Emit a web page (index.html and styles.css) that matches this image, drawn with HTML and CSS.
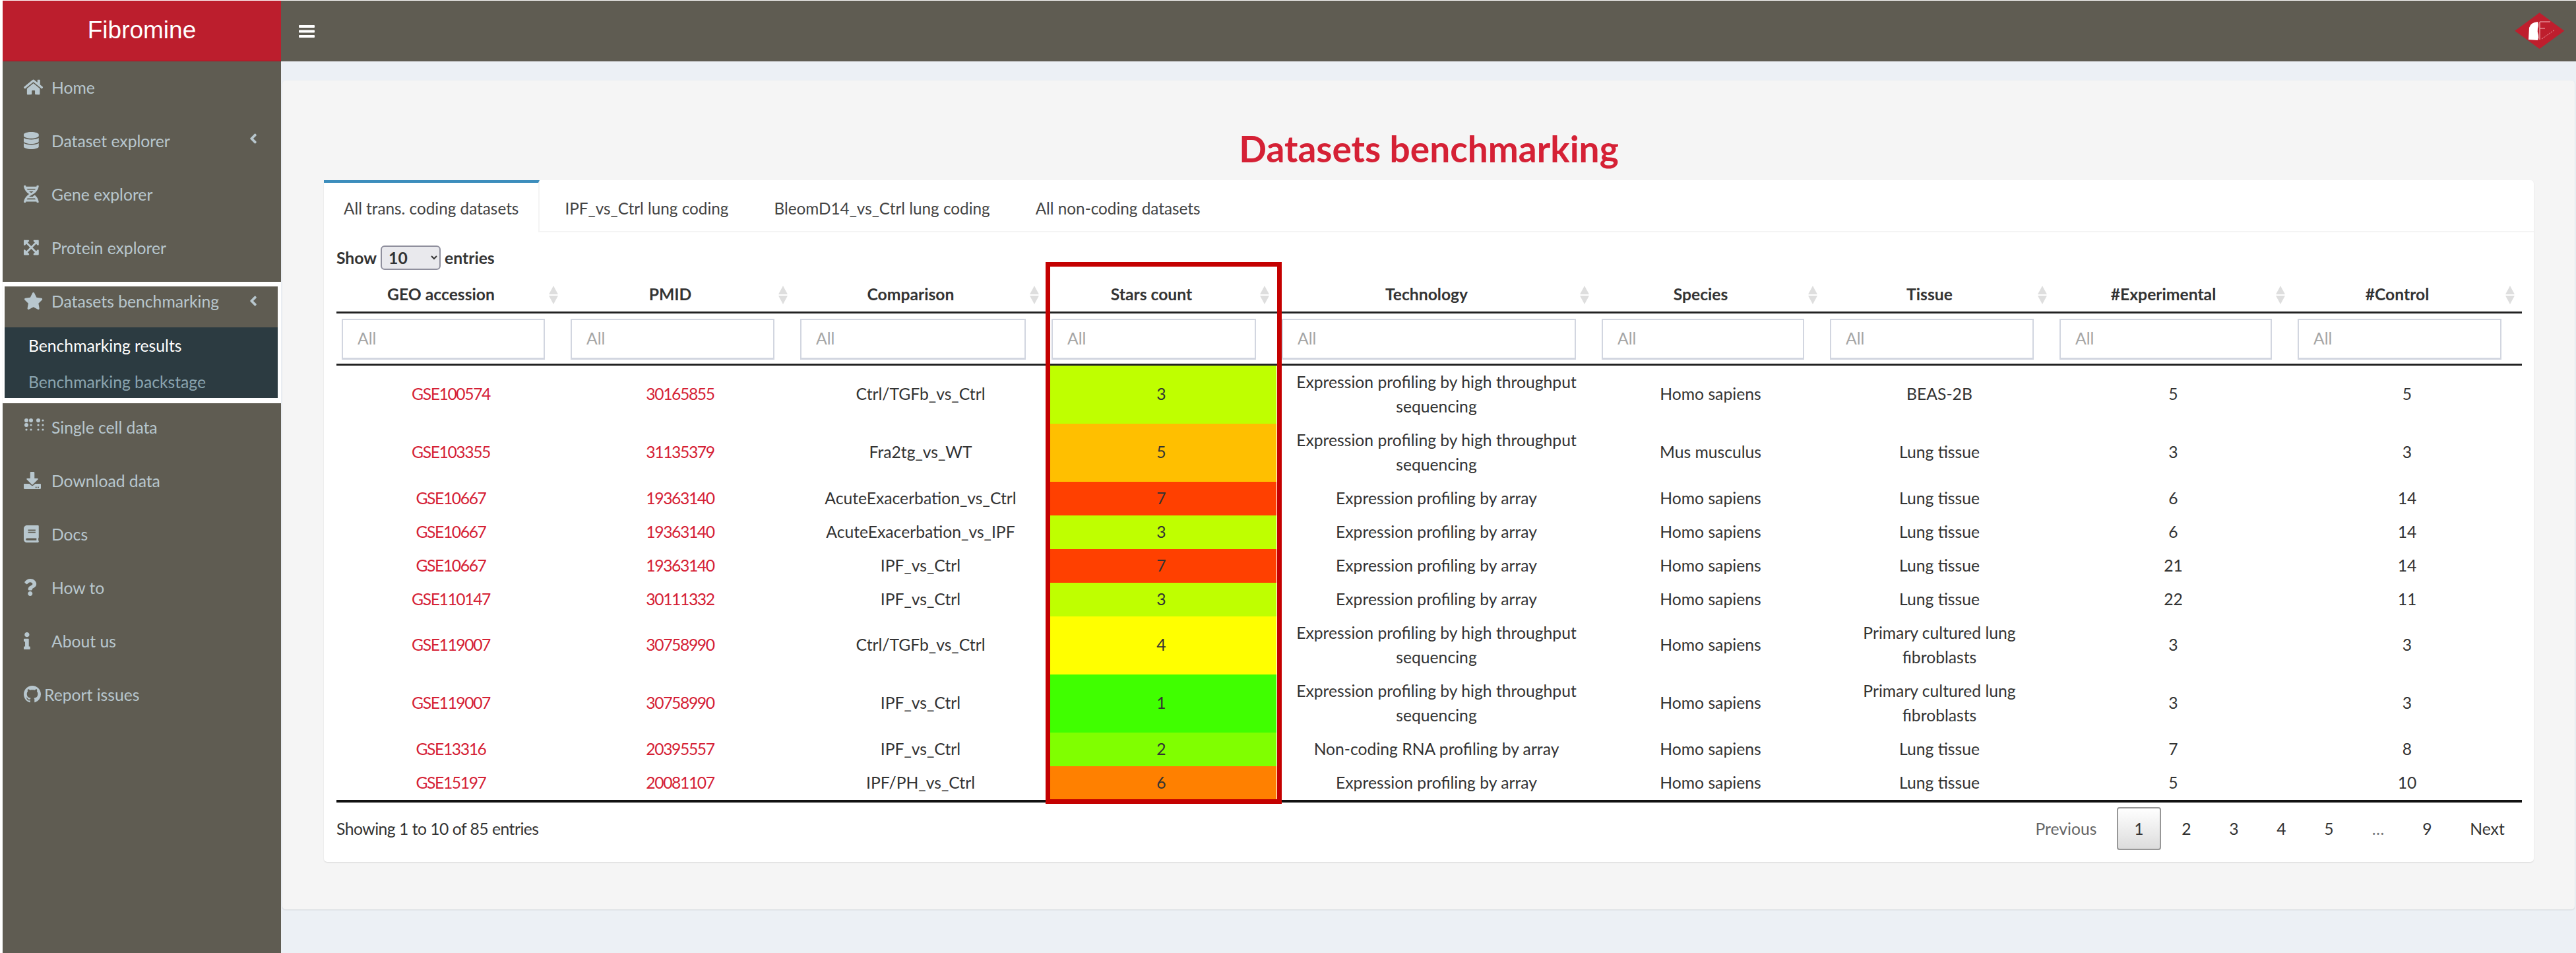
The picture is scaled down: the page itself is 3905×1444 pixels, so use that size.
FILE: index.html
```html
<!DOCTYPE html>
<html lang="en">
<head>
  <meta charset="UTF-8" />
  <title>Fibromine</title>
  <link rel="stylesheet" href="styles.css">
</head>
<body>
  <header class="topbar">
    <div class="brand">Fibromine</div>
    <nav class="navbar">
      <svg class="bars" viewBox="0 0 24 19"><rect width="24" height="4" rx="1"/><rect y="7.5" width="24" height="4" rx="1"/><rect y="15" width="24" height="4" rx="1"/></svg>
      <svg class="logo" viewBox="33 19 76 56">
        <polygon fill="#be1e2d" points="70.7,19.3 108.3,46.7 70.7,74 33.3,46.7"/>
        <path fill="#fff" d="M54 60 L55 42 Q57 34 68 33 Q70 38 68 43 Q67 48 69 53 Q70 57 68 61 Z"/>
        <path fill="none" stroke="#f3b9bf" stroke-width="1.2" d="M71 33H87M71 33V60M71 43H79"/>
        <path fill="none" stroke="#f3b9bf" stroke-width="1" stroke-dasharray="2 1.5" d="M74 59L94 45"/>
      </svg>
    </nav>
  </header>

  <div class="layout">
    <aside class="sidebar">
      <a class="menu-item"><span class="slot"><svg class="ico" viewBox="0 0 576 512"><path d="M280.37 148.26L96 300.11V464a16 16 0 0 0 16 16l112.06-.29a16 16 0 0 0 15.92-16V368a16 16 0 0 1 16-16h64a16 16 0 0 1 16 16v95.64a16 16 0 0 0 16 16.05L464 480a16 16 0 0 0 16-16V300L295.67 148.26a12.19 12.19 0 0 0-15.3 0zM571.6 251.47L488 182.56V44.05a12 12 0 0 0-12-12h-56a12 12 0 0 0-12 12v72.61L318.47 43a48 48 0 0 0-61 0L4.34 251.47a12 12 0 0 0-1.6 16.9l25.5 31A12 12 0 0 0 45.15 301l235.22-193.74a12.19 12.19 0 0 1 15.3 0L530.9 301a12 12 0 0 0 16.9-1.6l25.5-31a12 12 0 0 0-1.7-16.93z"/></svg></span>Home</a>
      <a class="menu-item"><span class="slot"><svg class="ico" viewBox="0 0 448 512"><path d="M448 73.143v45.714C448 159.143 347.667 192 224 192S0 159.143 0 118.857V73.143C0 32.857 100.333 0 224 0s224 32.857 224 73.143zM448 176v102.857C448 319.143 347.667 352 224 352S0 319.143 0 278.857V176c48.125 33.143 136.208 48.572 224 48.572S399.874 209.143 448 176zm0 160v102.857C448 479.143 347.667 512 224 512S0 479.143 0 438.857V336c48.125 33.143 136.208 48.572 224 48.572S399.874 369.143 448 336z"/></svg></span>Dataset explorer<svg class="chev" viewBox="0 0 256 512"><path d="M31.7 239l136-136c9.4-9.4 24.6-9.4 33.9 0l22.6 22.6c9.4 9.4 9.4 24.6 0 33.9L127.9 256l96.4 96.4c9.4 9.4 9.4 24.6 0 33.9L201.7 409c-9.4 9.4-24.6 9.4-33.9 0l-136-136c-9.5-9.4-9.5-24.6-.1-34z"/></svg></a>
      <a class="menu-item"><span class="slot"><svg class="ico" viewBox="0 0 448 512"><path d="M.1 494.1c-1.1 9.5 6.3 17.8 15.9 17.8l32.3.1c8.1 0 14.9-5.9 16-13.9.7-4.9 1.8-11.1 3.4-18.1H380c1.6 6.9 2.9 13.2 3.5 18.1 1.1 8 7.9 14 16 13.9l32.3-.1c9.6 0 17.1-8.3 15.9-17.8-4.6-37.9-25.6-129-118.9-207.7-17.6 12.4-37.1 24.2-58.5 35.4 6.2 4.6 11.4 9.4 17 14.2H159.7c21.3-18.1 47-35.6 78.7-51.4C410.5 199.1 442.1 65.8 447.9 17.9 449 8.4 441.6.1 432 .1L399.6 0c-8.1 0-14.9 5.9-16 13.9-.7 4.9-1.8 11.1-3.4 18.1H67.8c-1.6-7-2.7-13.1-3.4-18.1-1.1-8-7.9-14-16-13.9L16.1.1C6.5.1-1 8.4.1 17.9 5.3 60.8 31.4 171.8 160 256 31.5 340.2 5.3 451.2.1 494.1zM224 219.6c-25.1-13.7-46.4-28.4-64.3-43.6h128.5c-17.8 15.2-39.1 30-64.2 43.6zM355.1 96c-5.8 10.4-12.8 21.1-21 32H114c-8.3-10.9-15.3-21.6-21-32h262.1zM92.9 416c5.8-10.4 12.8-21.1 21-32h219.4c8.3 10.9 15.4 21.6 21.2 32H92.9z"/></svg></span>Gene explorer</a>
      <a class="menu-item"><span class="slot"><svg class="ico" viewBox="0 0 448 512"><path d="M448 344v112a23.94 23.94 0 0 1-24 24H312c-21.39 0-32.09-25.9-17-41l36.2-36.2L224 295.6 116.77 402.9 153 439c15.09 15.1 4.39 41-17 41H24a23.94 23.94 0 0 1-24-24V344c0-21.4 25.89-32.1 41-17l36.19 36.2L184.46 256 77.18 148.7 41 185c-15.1 15.1-41 4.4-41-17V56a23.94 23.94 0 0 1 24-24h112c21.39 0 32.09 25.9 17 41l-36.2 36.2L224 216.4l107.23-107.3L295 73c-15.09-15.1-4.39-41 17-41h112a23.94 23.94 0 0 1 24 24v112c0 21.4-25.89 32.1-41 17l-36.19-36.2L263.54 256l107.28 107.3L407 327.1c15.1-15.2 41-4.5 41 16.9z"/></svg></span>Protein explorer</a>

      <!-- highlighted group, white frame comes from the source screenshot -->
      <div class="bench-group">
        <a class="bench-head"><span class="slot"><svg class="ico" viewBox="0 0 576 512"><path d="M259.3 17.8L194 150.2 47.9 171.5c-26.2 3.8-36.7 36.1-17.7 54.6l105.7 103-25 145.5c-4.5 26.3 23.2 46 46.4 33.7L288 439.6l130.7 68.7c23.2 12.2 50.9-7.4 46.4-33.7l-25-145.5 105.7-103c19-18.5 8.5-50.8-17.7-54.6L382 150.2 316.7 17.8c-11.7-23.6-45.6-23.9-57.4 0z"/></svg></span>Datasets benchmarking<svg class="chev" viewBox="0 0 256 512"><path d="M31.7 239l136-136c9.4-9.4 24.6-9.4 33.9 0l22.6 22.6c9.4 9.4 9.4 24.6 0 33.9L127.9 256l96.4 96.4c9.4 9.4 9.4 24.6 0 33.9L201.7 409c-9.4 9.4-24.6 9.4-33.9 0l-136-136c-9.5-9.4-9.5-24.6-.1-34z"/></svg></a>
        <div class="submenu">
          <a class="sub-item active">Benchmarking results</a>
          <a class="sub-item">Benchmarking backstage</a>
        </div>
      </div>

      <a class="menu-item"><span class="slot"><svg class="ico braille" viewBox="0 0 32 20"><circle cx="4" cy="3" r="3"/><circle cx="11" cy="3" r="3"/><circle cx="22" cy="3" r="3"/><circle cx="29" cy="3" r="1.6"/><circle cx="4" cy="10" r="3"/><circle cx="11" cy="10" r="1.6"/><circle cx="22" cy="10" r="1.6"/><circle cx="29" cy="10" r="1.6"/><circle cx="4" cy="17" r="1.6"/><circle cx="11" cy="17" r="1.6"/><circle cx="22" cy="17" r="1.6"/><circle cx="29" cy="17" r="1.6"/></svg></span>Single cell data</a>
      <a class="menu-item"><span class="slot"><svg class="ico" viewBox="0 0 512 512"><path d="M216 0h80c13.3 0 24 10.7 24 24v168h87.7c17.8 0 26.7 21.5 14.1 34.1L269.7 378.3c-7.5 7.5-19.8 7.5-27.3 0L90.1 226.1c-12.6-12.6-3.7-34.1 14.1-34.1H192V24c0-13.3 10.7-24 24-24zm296 376v112c0 13.3-10.7 24-24 24H24c-13.3 0-24-10.7-24-24V376c0-13.3 10.7-24 24-24h146.7l49 49c20.1 20.1 52.5 20.1 72.6 0l49-49H488c13.3 0 24 10.7 24 24zm-124 88c0-11-9-20-20-20s-20 9-20 20 9 20 20 20 20-9 20-20zm64 0c0-11-9-20-20-20s-20 9-20 20 9 20 20 20 20-9 20-20z"/></svg></span>Download data</a>
      <a class="menu-item"><span class="slot"><svg class="ico" viewBox="0 0 448 512"><path d="M448 360V24c0-13.3-10.7-24-24-24H96C43 0 0 43 0 96v320c0 53 43 96 96 96h328c13.3 0 24-10.7 24-24v-16c0-7.5-3.5-14.3-8.9-18.7-4.2-15.4-4.2-59.3 0-74.7 5.4-4.3 8.9-11.1 8.9-18.6zM128 134c0-3.3 2.7-6 6-6h212c3.3 0 6 2.7 6 6v20c0 3.3-2.7 6-6 6H134c-3.3 0-6-2.7-6-6v-20zm0 64c0-3.3 2.7-6 6-6h212c3.3 0 6 2.7 6 6v20c0 3.3-2.7 6-6 6H134c-3.3 0-6-2.7-6-6v-20zm253.4 250H96c-17.7 0-32-14.3-32-32 0-17.6 14.4-32 32-32h285.4c-1.9 17.1-1.9 46.9 0 64z"/></svg></span>Docs</a>
      <a class="menu-item"><span class="slot"><svg class="ico" viewBox="0 0 384 512"><path d="M202.021 0C122.202 0 70.503 32.703 29.914 91.026c-7.363 10.58-5.093 25.086 5.178 32.874l43.138 32.709c10.373 7.865 25.132 6.026 33.253-4.148 25.049-31.381 43.63-49.449 82.757-49.449 30.764 0 68.816 19.799 68.816 49.631 0 22.552-18.617 34.134-48.993 51.164-35.423 19.86-82.299 44.576-82.299 106.405V320c0 13.255 10.745 24 24 24h72.471c13.255 0 24-10.745 24-24v-5.773c0-42.86 125.268-44.645 125.268-160.627C377.504 66.256 286.902 0 202.021 0zM192 373.459c-38.196 0-69.271 31.075-69.271 69.271 0 38.195 31.075 69.27 69.271 69.27s69.271-31.075 69.271-69.271-31.075-69.27-69.271-69.27z"/></svg></span>How to</a>
      <a class="menu-item"><span class="slot"><svg class="ico" viewBox="0 0 192 512"><path d="M20 424.229h20V279.771H20c-11.046 0-20-8.954-20-20V212c0-11.046 8.954-20 20-20h112c11.046 0 20 8.954 20 20v212.229h20c11.046 0 20 8.954 20 20V492c0 11.046-8.954 20-20 20H20c-11.046 0-20-8.954-20-20v-47.771c0-11.046 8.954-20 20-20zM96 0C56.235 0 24 32.235 24 72s32.235 72 72 72 72-32.235 72-72S135.764 0 96 0z"/></svg></span>About us</a>
      <a class="menu-item"><span class="slot slot-small"><svg class="ico" viewBox="0 0 16 16"><path d="M8 0C3.58 0 0 3.58 0 8c0 3.54 2.29 6.53 5.47 7.59.4.07.55-.17.55-.38 0-.19-.01-.82-.01-1.49-2.01.37-2.53-.49-2.69-.94-.09-.23-.48-.94-.82-1.13-.28-.15-.68-.52-.01-.53.63-.01 1.08.58 1.23.82.72 1.21 1.87.87 2.33.66.07-.52.28-.87.51-1.07-1.78-.2-3.64-.89-3.64-3.95 0-.87.31-1.59.82-2.15-.08-.2-.36-1.02.08-2.12 0 0 .67-.21 2.2.82.64-.18 1.32-.27 2-.27.68 0 1.36.09 2 .27 1.53-1.04 2.2-.82 2.2-.82.44 1.1.16 1.92.08 2.12.51.56.82 1.27.82 2.15 0 3.07-1.87 3.75-3.65 3.95.29.25.54.73.54 1.48 0 1.07-.01 1.93-.01 2.2 0 .21.15.46.55.38A8.013 8.013 0 0016 8c0-4.42-3.58-8-8-8z"/></svg></span>Report issues</a>
    </aside>

    <main class="content">
      <section class="panel">
        <h1>Datasets benchmarking</h1>

        <div class="card">
          <div class="tabs">
            <a class="tab active">All trans. coding datasets</a>
            <a class="tab">IPF_vs_Ctrl lung coding</a>
            <a class="tab">BleomD14_vs_Ctrl lung coding</a>
            <a class="tab">All non-coding datasets</a>
          </div>

          <div class="card-body">
            <div class="length">Show <select><option>10</option><option>25</option><option>50</option></select> entries</div>

            <table class="datasets">
              <colgroup>
                <col class="c-geo"><col class="c-pmid"><col class="c-comp"><col class="c-stars"><col class="c-tech"><col class="c-species"><col class="c-tissue"><col class="c-exp"><col class="c-ctrl">
              </colgroup>
              <thead>
                <tr class="head-row">
                  <th>GEO accession</th><th>PMID</th><th>Comparison</th><th>Stars count</th><th>Technology</th><th>Species</th><th>Tissue</th><th>#Experimental</th><th>#Control</th>
                </tr>
                <tr class="filter-row">
                  <td><input placeholder="All"></td><td><input placeholder="All"></td><td><input placeholder="All"></td><td><input placeholder="All"></td><td><input placeholder="All"></td><td><input placeholder="All"></td><td><input placeholder="All"></td><td><input placeholder="All"></td><td><input placeholder="All"></td>
                </tr>
              </thead>
              <tbody>
                <tr><td><a>GSE100574</a></td><td><a>30165855</a></td><td>Ctrl/TGFb_vs_Ctrl</td><td class="s3">3</td><td>Expression profiling by high throughput sequencing</td><td>Homo sapiens</td><td>BEAS-2B</td><td>5</td><td>5</td></tr>
                <tr><td><a>GSE103355</a></td><td><a>31135379</a></td><td>Fra2tg_vs_WT</td><td class="s5">5</td><td>Expression profiling by high throughput sequencing</td><td>Mus musculus</td><td>Lung tissue</td><td>3</td><td>3</td></tr>
                <tr><td><a>GSE10667</a></td><td><a>19363140</a></td><td>AcuteExacerbation_vs_Ctrl</td><td class="s7">7</td><td>Expression profiling by array</td><td>Homo sapiens</td><td>Lung tissue</td><td>6</td><td>14</td></tr>
                <tr><td><a>GSE10667</a></td><td><a>19363140</a></td><td>AcuteExacerbation_vs_IPF</td><td class="s3">3</td><td>Expression profiling by array</td><td>Homo sapiens</td><td>Lung tissue</td><td>6</td><td>14</td></tr>
                <tr><td><a>GSE10667</a></td><td><a>19363140</a></td><td>IPF_vs_Ctrl</td><td class="s7">7</td><td>Expression profiling by array</td><td>Homo sapiens</td><td>Lung tissue</td><td>21</td><td>14</td></tr>
                <tr><td><a>GSE110147</a></td><td><a>30111332</a></td><td>IPF_vs_Ctrl</td><td class="s3">3</td><td>Expression profiling by array</td><td>Homo sapiens</td><td>Lung tissue</td><td>22</td><td>11</td></tr>
                <tr><td><a>GSE119007</a></td><td><a>30758990</a></td><td>Ctrl/TGFb_vs_Ctrl</td><td class="s4">4</td><td>Expression profiling by high throughput sequencing</td><td>Homo sapiens</td><td>Primary cultured lung fibroblasts</td><td>3</td><td>3</td></tr>
                <tr><td><a>GSE119007</a></td><td><a>30758990</a></td><td>IPF_vs_Ctrl</td><td class="s1">1</td><td>Expression profiling by high throughput sequencing</td><td>Homo sapiens</td><td>Primary cultured lung fibroblasts</td><td>3</td><td>3</td></tr>
                <tr><td><a>GSE13316</a></td><td><a>20395557</a></td><td>IPF_vs_Ctrl</td><td class="s2">2</td><td>Non-coding RNA profiling by array</td><td>Homo sapiens</td><td>Lung tissue</td><td>7</td><td>8</td></tr>
                <tr><td><a>GSE15197</a></td><td><a>20081107</a></td><td>IPF/PH_vs_Ctrl</td><td class="s6">6</td><td>Expression profiling by array</td><td>Homo sapiens</td><td>Lung tissue</td><td>5</td><td>10</td></tr>
              </tbody>
            </table>

            <div class="table-foot">
              <div class="info">Showing 1 to 10 of 85 entries</div>
              <div class="pager">
                <a class="page prev">Previous</a>
                <a class="page current">1</a>
                <a class="page">2</a>
                <a class="page">3</a>
                <a class="page">4</a>
                <a class="page">5</a>
                <span class="page gap">…</span>
                <a class="page">9</a>
                <a class="page next">Next</a>
              </div>
            </div>
          </div>

          <div class="stars-frame"></div>
        </div>
      </section>
    </main>
  </div>
</body>
</html>
```

FILE: styles.css
```css
* {
  box-sizing: border-box;
}

html, body {
  height: 100%;
}

body {
  margin: 0;
  padding: 1px 0 0 4px;
  overflow: hidden;
  background: #fff;
  color: #333;
  font-family: Lato, "Open Sans", sans-serif;
  font-size: 24.7px;
}

/* top bar */
.topbar {
  display: flex;
  height: 92px;
}

.brand {
  width: 422px;
  background: #bc1e2d;
  color: #fff;
  font-family: "Liberation Sans", Arial, sans-serif;
  font-size: 37px;
  line-height: 90px;
  text-align: center;
}

.navbar {
  flex: 1;
  display: flex;
  align-items: center;
  justify-content: space-between;
  padding: 0 17px 0 27px;
  background: #5f5c52;
}

.bars {
  width: 24px;
  height: 19px;
  fill: #fff;
}

.logo {
  width: 76px;
  height: 56px;
}

/* sidebar */
.layout {
  display: flex;
  height: 1351px;
}

.sidebar {
  width: 422px;
  background: #5f5c52;
  color: #b8c7ce;
  box-shadow: 1px 0 2px rgba(0, 0, 0, .35);
}

.menu-item {
  display: flex;
  align-items: center;
  height: 81px;
  padding: 0 0 3px 32px;
}

.bench-head {
  display: flex;
  align-items: center;
  height: 62px;
  padding: 0 0 18px 29px;
}

.slot {
  display: flex;
  align-items: center;
  width: 42px;
  flex: none;
}

.slot-small {
  width: 31px;
}

.ico {
  height: 26px;
  fill: #b8c7ce;
}

.braille {
  width: 32px;
  height: 20px;
  margin-top: -6px;
}

.chev {
  width: 12px;
  height: 24px;
  margin-left: auto;
  margin-right: 36px;
  margin-top: -6px;
  fill: #b8c7ce;
}

.bench-head .chev {
  margin-right: 31px;
  margin-top: 0;
}

.bench-group {
  margin: 10px 0 -3px;
  padding: 7px 5px 8px 3px;
  background: #fff;
}

.bench-group .bench-head {
  background: #5f5c52;
}

.submenu {
  display: flex;
  flex-direction: column;
  gap: 8px;
  height: 107px;
  padding: 5px 0 0 36px;
  background: #2c3b41;
}

.sub-item {
  height: 47px;
  line-height: 45px;
  color: #8aa4af;
}

.sub-item.active {
  color: #fff;
}

/* main area */
.content {
  flex: 1;
  padding: 29px 2px 0 2px;
  background: #ecf0f5;
}

.panel {
  height: 1256px;
  padding: 0 62px 0 63px;
  background: #f5f5f5;
  border-radius: 5px;
  box-shadow: 0 1px 2px rgba(0, 0, 0, .12);
}

h1 {
  margin: 0;
  padding: 74px 0 17px;
  color: #d52135;
  font-size: 55px;
  font-weight: 700;
  line-height: 58px;
  text-align: center;
}

.card {
  position: relative;
  height: 1033px;
  margin-top: 2px;
  background: #fff;
  border-radius: 5px;
  box-shadow: 0 1px 2px rgba(0, 0, 0, .12);
}

.tabs {
  display: flex;
  height: 79px;
  border-bottom: 2px solid #f4f4f4;
  font-size: 24.3px;
}

.tab {
  height: 79px;
  padding: 4px 30px 0;
  margin-right: 9px;
  line-height: 78px;
  color: #444;
  white-space: nowrap;
}

.tab.active {
  background: #fff;
  border-top: 4px solid #3c8dbc;
  border-right: 2px solid #f4f4f4;
  padding-top: 0;
  margin-right: 8px;
}

.card-body {
  padding: 20px 18px 0 19px;
}

.length {
  display: flex;
  align-items: center;
  gap: 6px;
  height: 37px;
  font-weight: 700;
}

.length select {
  width: 91px;
  height: 37px;
  padding-left: 6px;
  background: #e9e9ed;
  border: 2px solid #8f8f9d;
  border-radius: 6px;
  color: #333;
  font-family: inherit;
  font-size: 24.7px;
  font-weight: 700;
}

/* table */
.datasets {
  width: 3313px;
  margin-top: 12px;
  table-layout: fixed;
  border-collapse: collapse;
  text-align: center;
}

.c-geo { width: 347px; }
.c-pmid { width: 348px; }
.c-comp { width: 381px; }
.c-stars { width: 349px; }
.c-tech { width: 485px; }
.c-species { width: 346px; }
.c-tissue { width: 348px; }
.c-exp { width: 361px; }
.c-ctrl { width: 348px; }

.head-row th {
  position: relative;
  height: 52px;
  padding: 0 40px 2px 10px;
  border-bottom: 3px solid #222;
  font-weight: 700;
}

.head-row th::before,
.head-row th::after {
  content: "";
  position: absolute;
  right: 11px;
  border-left: 7px solid transparent;
  border-right: 7px solid transparent;
}

.head-row th::before {
  top: 12px;
  border-bottom: 13px solid #dedede;
}

.head-row th::after {
  top: 27px;
  border-top: 13px solid #dedede;
}

.filter-row td {
  height: 79px;
  padding: 6px 31px 4px 8px;
  border-bottom: 3px solid #222;
}

.filter-row input {
  display: block;
  width: 100%;
  height: 62px;
  padding: 0 22px 2px;
  background: #fff;
  border: 2px solid #d2d6e0;
  border-bottom-width: 3px;
  font-family: inherit;
  font-size: 24.7px;
}

.filter-row input::placeholder {
  color: #a5a5a5;
}

.datasets tbody td {
  padding: 6px 10px 8px;
  line-height: 37px;
}

.datasets tbody tr:last-child td {
  border-bottom: 4px solid #111;
}

.datasets a {
  color: #d52135;
  letter-spacing: -1.4px;
}

.s1 { background: #40ff00; }
.s2 { background: #80ff00; }
.s3 { background: #bfff00; }
.s4 { background: #ffff00; }
.s5 { background: #ffbf00; }
.s6 { background: #ff8000; }
.s7 { background: #ff4000; }

/* footer */
.table-foot {
  display: flex;
  justify-content: space-between;
  align-items: center;
  padding-top: 7px;
}

.info {
  letter-spacing: -.5px;
}

.pager {
  display: flex;
  gap: 5px;
}

.page {
  width: 67px;
  height: 65px;
  line-height: 61px;
  text-align: center;
  border: 2px solid transparent;
  border-radius: 4px;
}

.page.prev {
  width: 144px;
  color: #666;
}

.page.next {
  width: 105px;
}

.page.gap {
  width: 72px;
  color: #777;
}

.page.current {
  background: linear-gradient(#fff, #dcdcdc);
  border-color: #979797;
}

/* red annotation over the stars column */
.stars-frame {
  position: absolute;
  left: 1094px;
  top: 124px;
  width: 358px;
  height: 821px;
  border: 7px solid #c40000;
  pointer-events: none;
}
```
